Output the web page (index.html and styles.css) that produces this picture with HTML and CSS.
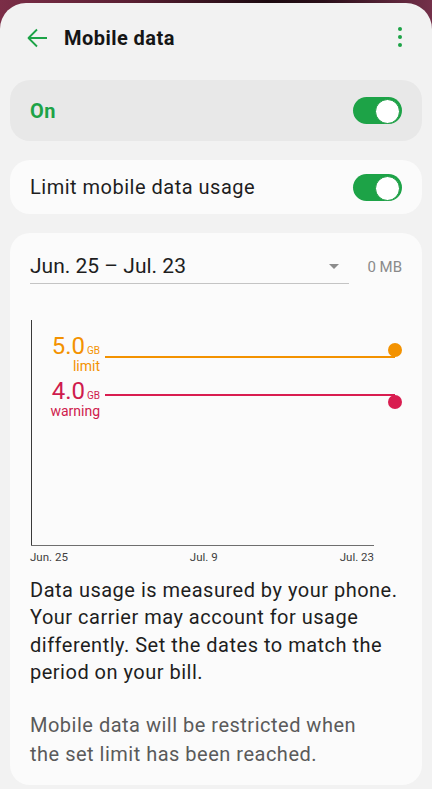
FILE: index.html
```html
<!DOCTYPE html>
<html>

<head>
    <meta charset="UTF-8">
    <title>Mobile data</title>
    <link rel="stylesheet" href="styles.css">
</head>

<body>
    <div class="panel">
        <header class="topbar">
            <svg class="back" width="22" height="20" viewBox="0 0 22 20">
                <path d="M21 10H2.5M11 1.5L2.5 10l8.5 8.5" fill="none" stroke="#1da347" stroke-width="1.8" stroke-linejoin="round"/>
            </svg>
            <h1>Mobile data</h1>
            <div class="kebab"><span></span><span></span><span></span></div>
        </header>

        <div class="card card-on">
            <span class="on-label">On</span>
            <span class="switch"></span>
        </div>

        <div class="card card-limit">
            <span>Limit mobile data usage</span>
            <span class="switch"></span>
        </div>

        <div class="card card-usage">
            <div class="cycle">
                <div class="select">
                    <span>Jun. 25 – Jul. 23</span>
                    <span class="caret"></span>
                </div>
                <span class="used">0 MB</span>
            </div>

            <div class="chart">
                <div class="plot">
                    <div class="mark mark-limit">
                        <div class="mark-label">
                            <div class="val">5.0<small>GB</small></div>
                            <div class="cap">limit</div>
                        </div>
                        <div class="track"></div>
                    </div>
                    <div class="mark mark-warning">
                        <div class="mark-label">
                            <div class="val">4.0<small>GB</small></div>
                            <div class="cap">warning</div>
                        </div>
                        <div class="track"></div>
                    </div>
                </div>
                <div class="axis"></div>
                <div class="ticks">
                    <span>Jun. 25</span>
                    <span>Jul. 9</span>
                    <span>Jul. 23</span>
                </div>
            </div>

            <p class="note">Data usage is measured by your phone. Your carrier may account for usage differently. Set the dates to match the period on your bill.</p>
            <p class="note note-muted">Mobile data will be restricted when the set limit has been reached.</p>
        </div>
    </div>
</body>

</html>
```

FILE: styles.css
```css
* {
    box-sizing: border-box;
}

body {
    margin: 0;
    height: 789px;
    overflow: hidden;
    font-family: Roboto, 'Noto Sans', sans-serif;
    color: #1e1e1e;
    background: linear-gradient(90deg, #7b2e47 0%, #5a1f33 30%, #1c0a10 62%, #2a0f19 75%, #74304a 100%);
}

.panel {
    margin-top: 3px;
    height: 786px;
    padding: 0 10px;
    background-color: #f2f2f2;
    border-radius: 26px 26px 0 0;
}

.topbar {
    display: flex;
    align-items: center;
    height: 70px;
    padding: 0 20px 0 16px;
}

.back {
    display: block;
}

.topbar h1 {
    flex: 1;
    margin: 0 0 0 16px;
    font-size: 20px;
    font-weight: 700;
    letter-spacing: 0.45px;
    color: #151515;
}

.kebab {
    display: flex;
    flex-direction: column;
    gap: 4px;
    margin-top: -2px;
}

.kebab span {
    width: 4px;
    height: 4px;
    border-radius: 50%;
    background-color: #1da347;
}

.card {
    display: flex;
    align-items: center;
    justify-content: space-between;
    padding: 0 20px;
    border-radius: 20px;
    background-color: #fbfbfb;
    font-size: 20px;
    letter-spacing: 0.5px;
}

.card-on {
    margin-top: 7px;
    height: 61px;
    background-color: #e8e8e8;
}

.on-label {
    color: #1da347;
    font-weight: 700;
}

.card-limit {
    margin-top: 19px;
    height: 54px;
}

.switch {
    position: relative;
    width: 49px;
    height: 27px;
    border-radius: 14px;
    background-color: #1da347;
}

.switch::after {
    content: '';
    position: absolute;
    top: 2px;
    right: 2px;
    width: 23px;
    height: 23px;
    border-radius: 50%;
    background-color: #ffffff;
    border: 1px solid #1a9a42;
}

.card-usage {
    display: block;
    margin-top: 19px;
    padding: 20px 20px 17px;
    letter-spacing: 0;
}

.cycle {
    display: flex;
    align-items: center;
}

.select {
    flex: 1;
    display: flex;
    align-items: center;
    justify-content: space-between;
    padding: 0 10px 4px 0;
    border-bottom: 1px solid #c4c4c4;
    font-size: 21px;
    line-height: 26px;
}

.caret {
    width: 0;
    height: 0;
    border-left: 5px solid transparent;
    border-right: 5px solid transparent;
    border-top: 5px solid #8c8c8c;
}

.used {
    margin-left: 18px;
    font-size: 15px;
    color: #8a8a8a;
    padding-bottom: 4px;
}

.chart {
    margin-top: 36px;
}

.plot {
    height: 225px;
    padding-top: 14px;
    margin-left: 1px;
    border-left: 1px solid #3a3a3a;
}

.mark {
    display: flex;
    align-items: flex-start;
}

.mark-warning {
    margin-top: 4px;
}

.mark-label {
    width: 68px;
    text-align: right;
}

.val {
    font-size: 24px;
    line-height: 24px;
}

.val small {
    font-size: 10px;
    line-height: 0;
    margin-left: 2px;
}

.cap {
    font-size: 14px;
    line-height: 17px;
}

.track {
    position: relative;
    flex: 1;
    height: 2px;
    margin: 22px 7px 0 5px;
}

.track::after {
    content: '';
    position: absolute;
    right: -7px;
    width: 14px;
    height: 14px;
    border-radius: 50%;
}

.mark-limit {
    color: #f39200;
}

.mark-limit .track,
.mark-limit .track::after {
    background-color: #f39200;
}

.mark-limit .track::after {
    top: -13px;
}

.mark-warning {
    color: #cf1b4d;
}

.mark-warning .track {
    margin-top: 15px;
}

.mark-warning .track,
.mark-warning .track::after {
    background-color: #d91d50;
}

.mark-warning .track::after {
    top: 1px;
}

.axis {
    margin: 0 28px 0 1px;
    border-top: 1px solid #6e6e6e;
}

.ticks {
    display: flex;
    justify-content: space-between;
    margin: 4px 28px 0 0;
    font-size: 11.5px;
    line-height: 14px;
    color: #404040;
}

.note {
    margin: 13px 0 0;
    font-size: 20px;
    line-height: 27.3px;
    letter-spacing: 0.5px;
    color: #1e1e1e;
}

.note-muted {
    margin-top: 25px;
    padding-right: 40px;
    line-height: 28.5px;
    color: #5a5a5a;
}
```
